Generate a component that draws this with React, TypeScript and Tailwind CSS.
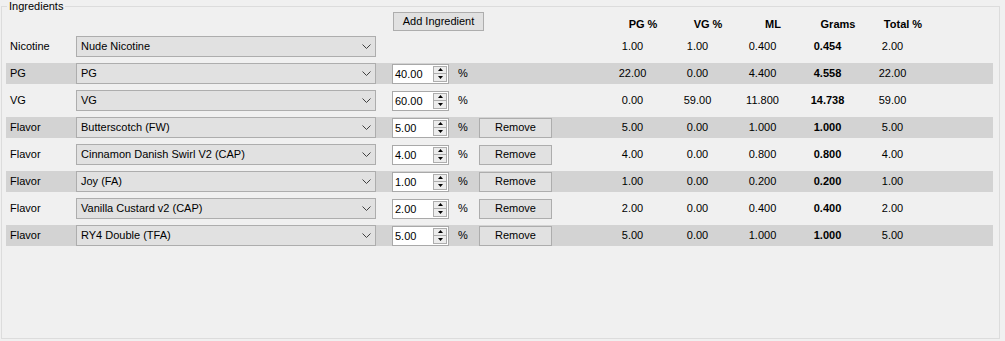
import React from "react";

type Row = {
  kind: string;
  name: string;
  amount?: string;
  removable?: boolean;
  pg: string;
  vg: string;
  ml: string;
  grams: string;
  total: string;
};

const rows: Row[] = [
  { kind: "Nicotine", name: "Nude Nicotine", pg: "1.00", vg: "1.00", ml: "0.400", grams: "0.454", total: "2.00" },
  { kind: "PG", name: "PG", amount: "40.00", pg: "22.00", vg: "0.00", ml: "4.400", grams: "4.558", total: "22.00" },
  { kind: "VG", name: "VG", amount: "60.00", pg: "0.00", vg: "59.00", ml: "11.800", grams: "14.738", total: "59.00" },
  { kind: "Flavor", name: "Butterscotch (FW)", amount: "5.00", removable: true, pg: "5.00", vg: "0.00", ml: "1.000", grams: "1.000", total: "5.00" },
  { kind: "Flavor", name: "Cinnamon Danish Swirl V2 (CAP)", amount: "4.00", removable: true, pg: "4.00", vg: "0.00", ml: "0.800", grams: "0.800", total: "4.00" },
  { kind: "Flavor", name: "Joy (FA)", amount: "1.00", removable: true, pg: "1.00", vg: "0.00", ml: "0.200", grams: "0.200", total: "1.00" },
  { kind: "Flavor", name: "Vanilla Custard v2 (CAP)", amount: "2.00", removable: true, pg: "2.00", vg: "0.00", ml: "0.400", grams: "0.400", total: "2.00" },
  { kind: "Flavor", name: "RY4 Double (TFA)", amount: "5.00", removable: true, pg: "5.00", vg: "0.00", ml: "1.000", grams: "1.000", total: "5.00" },
];

const Combo = ({ value }: { value: string }) => (
  <div className="w-[300px] h-[21px] flex items-center justify-between border border-[#adadad] bg-[#e1e1e1] pl-[4px] pr-[4px]">
    <span>{value}</span>
    <svg width="9" height="6" viewBox="0 0 9 6">
      <polyline points="0.5,0.5 4.5,4.5 8.5,0.5" fill="none" stroke="#404040" strokeWidth="1" />
    </svg>
  </div>
);

const Spinner = ({ value }: { value: string }) => (
  <div className="w-[57px] h-[20px] flex border border-[#a9a9a9] bg-white">
    <span className="flex-1 pl-[2px] leading-[18px]">{value}</span>
    <div className="w-[16px] flex flex-col p-[1px] gap-0">
      <div className="flex-1 flex items-center justify-center border border-[#adadad] bg-[#ececec]">
        <svg width="5" height="3" viewBox="0 0 5 3">
          <polygon points="2.5,0 5,3 0,3" fill="#000" />
        </svg>
      </div>
      <div className="flex-1 flex items-center justify-center border border-[#adadad] border-t-0 bg-[#ececec]">
        <svg width="5" height="3" viewBox="0 0 5 3">
          <polygon points="0,0 5,0 2.5,3" fill="#000" />
        </svg>
      </div>
    </div>
  </div>
);

export default function App() {
  return (
    <div
      className="w-[1005px] h-[341px] bg-[#f0f0f0] pl-[1px] pr-[5px] pb-[2px] flex text-[11px] text-black"
      style={{ fontFamily: '"Liberation Sans", Arial, sans-serif' }}
    >
      <fieldset className="flex-1 border border-[#dcdcdc] pl-[4px]">
        <legend className="ml-[1px] px-[2px] leading-[13px]">Ingredients</legend>
        <div className="flex flex-col">
          <div className="flex items-center h-[24px] -mt-[1px]">
            <div className="w-[387px] shrink-0" />
            <button className="w-[91px] h-[19px] self-start border border-[#adadad] bg-[#e1e1e1] text-[11px] leading-none">
              Add Ingredient
            </button>
            <div className="w-[122px] shrink-0" />
            {["PG %", "VG %", "ML", "Grams", "Total %"].map((h) => (
              <div key={h} className="w-[65px] shrink-0 pl-[9px] text-center font-bold">
                {h}
              </div>
            ))}
          </div>
          <div className="flex flex-col gap-[6px]">
            {rows.map((r, i) => (
              <div
                key={i}
                className={`flex items-center h-[21px] w-[987px] ${i % 2 === 1 ? "bg-[#d3d3d3]" : ""}`}
              >
                <div className="w-[70px] shrink-0 pl-[4px]">{r.kind}</div>
                <Combo value={r.name} />
                <div className="w-[16px] shrink-0" />
                {r.amount ? <Spinner value={r.amount} /> : <div className="w-[57px] shrink-0" />}
                <div className="w-[30px] shrink-0 pl-[9px]">{r.amount ? "%" : ""}</div>
                {r.removable ? (
                  <button className="w-[73px] h-[20px] border border-[#adadad] bg-[#e1e1e1] text-[11px] leading-none">
                    Remove
                  </button>
                ) : (
                  <div className="w-[73px] shrink-0" />
                )}
                <div className="w-[48px] shrink-0" />
                <div className="w-[65px] shrink-0 text-center">{r.pg}</div>
                <div className="w-[65px] shrink-0 text-center">{r.vg}</div>
                <div className="w-[65px] shrink-0 text-center">{r.ml}</div>
                <div className="w-[65px] shrink-0 text-center font-bold">{r.grams}</div>
                <div className="w-[65px] shrink-0 text-center">{r.total}</div>
              </div>
            ))}
          </div>
        </div>
      </fieldset>
    </div>
  );
}
